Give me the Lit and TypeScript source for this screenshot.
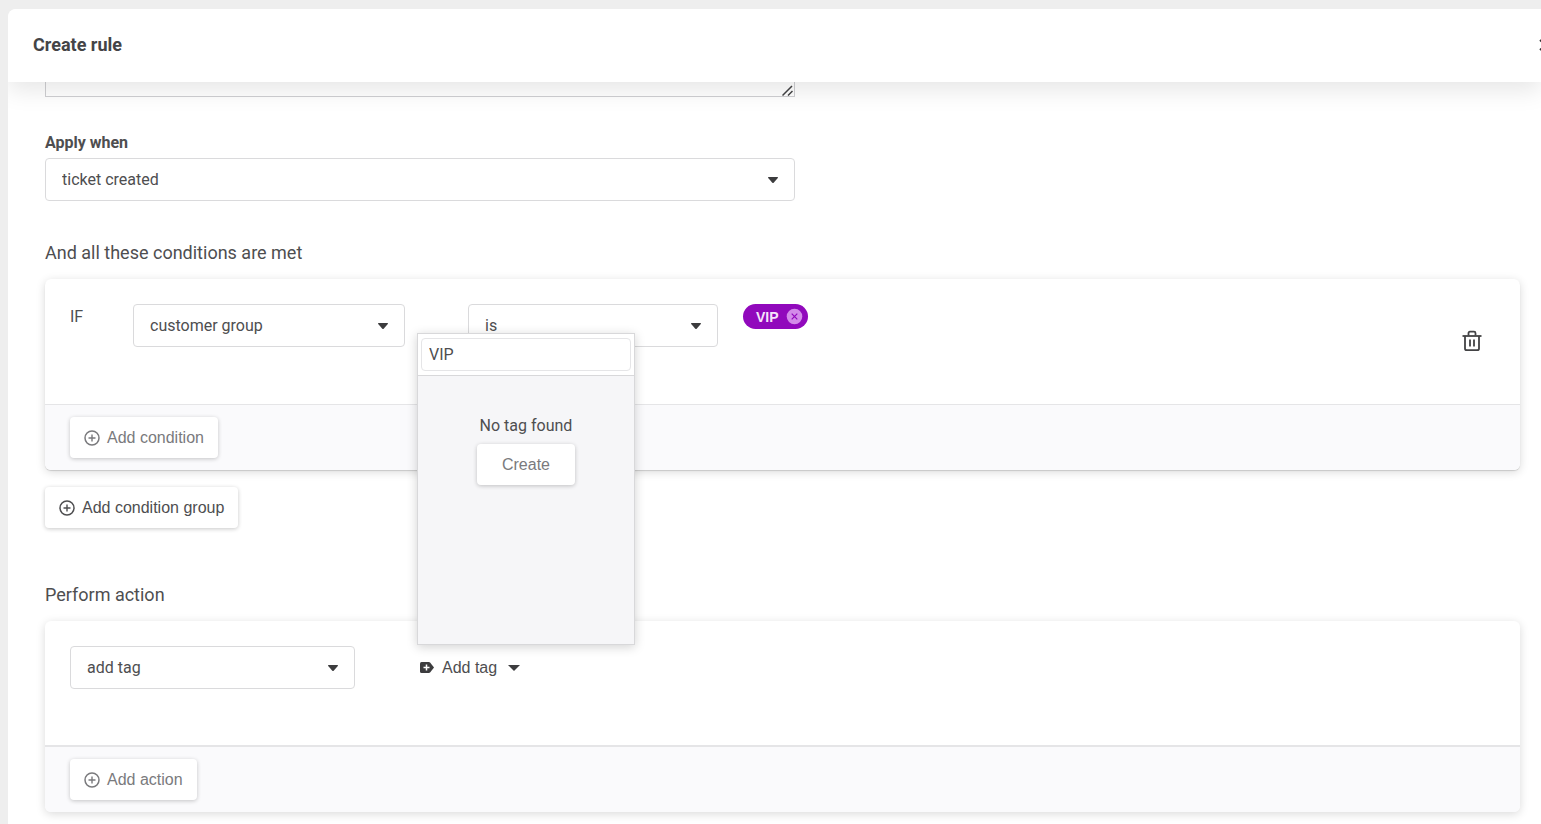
import { LitElement, html, css } from "lit";
import { customElement, property, state } from "lit/decorators.js";

const plusCircle = html`<svg class="icon" viewBox="0 0 16 16" aria-hidden="true">
  <circle cx="8" cy="8" r="7" fill="none" stroke="currentColor" stroke-width="1.5" />
  <path d="M8 4.5v7M4.5 8h7" fill="none" stroke="currentColor" stroke-width="1.4" />
</svg>`;

@customElement("select-box")
class SelectBox extends LitElement {
  @property() label = "";
  @property() name = "";
  @property({ type: Boolean }) showLabel = false;
  @property({ attribute: false }) options: string[] = [];

  static styles = css`
    :host {
      display: block;
    }
    .label {
      display: block;
      font-size: 16px;
      font-weight: 700;
      line-height: 24px;
      margin-bottom: 3px;
    }
    .box {
      display: grid;
      align-items: center;
    }
    .control {
      grid-area: 1 / 1;
      appearance: none;
      box-sizing: border-box;
      width: 100%;
      height: 43px;
      padding: 0 40px 0 16px;
      border: 1px solid #dadadc;
      border-radius: 4px;
      background: #fff;
      color: #4e4e50;
      font-family: inherit;
      font-size: 16px;
    }
    .arrow {
      grid-area: 1 / 1;
      justify-self: end;
      width: 12px;
      height: 8px;
      margin-right: 16px;
      pointer-events: none;
      fill: #3c3c3e;
    }
  `;

  render() {
    return html`
      ${this.showLabel ? html`<label class="label" for="control">${this.label}</label>` : ""}
      <div class="box">
        <select class="control" id="control" name=${this.name} aria-label=${this.label}>
          ${this.options.map((o) => html`<option>${o}</option>`)}
        </select>
        <svg class="arrow" viewBox="0 0 12 8" aria-hidden="true">
          <path d="M1.6 1h8.8q1 .2.4 1L6.7 6.700q-.7.6-1.400 0L1.200 2q-.6-.8.4-1z" />
        </svg>
      </div>
    `;
  }
}

@customElement("tag-picker")
class TagPicker extends LitElement {
  @state() private open = true;

  static styles = css`
    :host {
      display: block;
      position: relative;
      font-family: "Liberation Sans", Arial, sans-serif;
    }
    .trigger {
      display: flex;
      align-items: center;
      gap: 8px;
      height: 43px;
      padding: 0;
      border: 0;
      background: none;
      color: #4e4e50;
      font-family: inherit;
      font-size: 16px;
    }
    .tag {
      width: 14px;
      height: 11px;
    }
    .caret {
      width: 12px;
      height: 6px;
      margin-left: 3px;
      fill: #3c3c3e;
    }
    .popover {
      position: absolute;
      z-index: 2;
      bottom: 44px;
      left: -3px;
      box-sizing: border-box;
      width: 218px;
      height: 312px;
      border: 1px solid #d8d8da;
      background: #f6f6f8;
      box-shadow: 0 2px 10px rgba(0, 0, 0, 0.18);
      font-family: Roboto, sans-serif;
      font-size: 16px;
    }
    .search {
      padding: 4px 3px;
      border-bottom: 1px solid #d8d8da;
      background: #fff;
    }
    .input {
      display: block;
      box-sizing: border-box;
      width: 100%;
      height: 33px;
      padding: 0 7px;
      border: 1px solid #e5e5e7;
      border-radius: 4px;
      background: #fff;
      color: #4e4e50;
      font: inherit;
      outline: none;
    }
    .empty {
      display: flex;
      flex-direction: column;
      align-items: center;
      gap: 6px;
      padding-top: 38px;
      line-height: 24px;
    }
    .message {
      margin: 0;
    }
    .create {
      height: 41px;
      padding: 0 25px;
      border: 0;
      border-radius: 4px;
      background: #fff;
      box-shadow: 0 1px 4px rgba(0, 0, 0, 0.22);
      color: #7a7a7d;
      font-family: "Liberation Sans", Arial, sans-serif;
      font-size: 16px;
    }
  `;

  render() {
    return html`
      <button class="trigger" type="button" aria-expanded=${this.open} @click=${() => (this.open = !this.open)}>
        <svg class="tag" viewBox="0 0 14 11" aria-hidden="true">
          <path d="M1.500 0h7.300q.9 0 1.500.7L14 5.500l-3.700 4.800q-.6.7-1.500.7H1.500Q0 11 0 9.500v-8Q0 0 1.500 0z" fill="#3c3c3e" />
          <path d="M6.500 2.500v6M3.500 5.500h6" stroke="#fff" stroke-width="1.500" />
        </svg>
        <span>Add tag</span>
        <svg class="caret" viewBox="0 0 12 6" aria-hidden="true"><path d="M0 0h12L6 6z" /></svg>
      </button>
      ${this.open
        ? html`<div class="popover">
            <div class="search"><input class="input" type="text" aria-label="Search tags" .value=${"VIP"} /></div>
            <div class="empty">
              <p class="message">No tag found</p>
              <button class="create" type="button">Create</button>
            </div>
          </div>`
        : ""}
    `;
  }
}

@customElement("app-root")
class AppRoot extends LitElement {
  static styles = css`
    :host {
      display: block;
      box-sizing: border-box;
      height: 100vh;
      padding: 9px 0 0 8px;
      overflow: hidden;
      background: #eeeeee;
      color: #4e4e50;
      font-family: Roboto, sans-serif;
      font-size: 16px;
    }
    .panel {
      display: flex;
      flex-direction: column;
      height: 100%;
      overflow: hidden;
      border-radius: 8px 0 0 0;
      background: #fff;
    }
    .header {
      position: relative;
      z-index: 3;
      display: flex;
      align-items: center;
      justify-content: space-between;
      box-sizing: border-box;
      height: 73px;
      flex: none;
      padding: 0 0 2px 25px;
      background: #fff;
      box-shadow: 0 8px 24px rgba(0, 0, 0, 0.1);
    }
    .title {
      margin: 0;
      color: #444446;
      font-size: 18px;
      font-weight: 700;
      line-height: 24px;
    }
    .close {
      width: 12px;
      height: 12px;
      margin-right: -10px;
      padding: 0;
      border: 0;
      background: none;
      color: #333;
    }
    .close svg {
      display: block;
    }
    .body {
      flex: 1;
      min-height: 0;
      padding: 0 21px 0 37px;
      overflow: hidden;
    }
    .field {
      max-width: 750px;
    }
    .scrolled {
      position: relative;
      display: flex;
      align-items: flex-end;
      height: 15px;
      margin-bottom: 34px;
      overflow: hidden;
    }
    .description {
      box-sizing: border-box;
      width: 100%;
      height: 80px;
      flex: none;
      border: 1px solid #cfcfd2;
      background: #fff;
      font: inherit;
      resize: none;
    }
    .grip {
      position: absolute;
      right: 2px;
      bottom: 1px;
      width: 11px;
      height: 11px;
      fill: none;
      stroke: #434345;
      stroke-width: 1.5;
    }
    .heading {
      margin: 40px 0 14px;
      font-size: 18px;
      font-weight: 400;
      line-height: 24px;
    }
    .card {
      border-radius: 6px;
      background: #fff;
      box-shadow: 0 2px 10px rgba(0, 0, 0, 0.15);
    }
    .condition {
      box-shadow: 0 1px 1px rgba(0, 0, 0, 0.14), 0 2px 10px rgba(0, 0, 0, 0.15);
    }
    .row {
      display: grid;
      align-items: start;
      box-sizing: border-box;
      min-height: 125px;
      padding: 25px;
    }
    .if-row {
      grid-template-columns: 63px 272px 250px 1fr auto;
    }
    .if-row .operator {
      margin: 0 -63px 0 63px;
    }
    .if-row .value {
      margin-left: 88px;
    }
    .action-row {
      grid-template-columns: 285px 1fr;
      column-gap: 65px;
      min-height: 124px;
    }
    .word {
      line-height: 26px;
    }
    .footer {
      padding: 12px 25px;
      border-top: 1px solid #e5e5e7;
      border-radius: 0 0 6px 6px;
      background: #fafafc;
    }
    .action-row + .footer {
      border-top-width: 2px;
    }
    .button {
      display: flex;
      align-items: center;
      gap: 7px;
      height: 41px;
      padding: 0 14px;
      border: 0;
      border-radius: 4px;
      background: #fff;
      box-shadow: 0 1px 4px rgba(0, 0, 0, 0.22);
      color: #7a7a7d;
      font-family: "Liberation Sans", Arial, sans-serif;
      font-size: 16px;
    }
    .strong {
      margin-top: 17px;
      color: #4e4e50;
    }
    .icon {
      width: 16px;
      height: 16px;
    }
    .badge {
      display: inline-flex;
      align-items: center;
      gap: 7px;
      height: 25px;
      padding: 0 5px 0 13px;
      border-radius: 13px;
      background: #9109bc;
      color: #f6e3fb;
      font-family: "Liberation Sans", Arial, sans-serif;
      font-size: 14px;
      font-weight: 700;
    }
    .remove,
    .delete {
      display: block;
      padding: 0;
      border: 0;
      background: none;
    }
    .remove svg,
    .delete svg {
      display: block;
    }
    .delete {
      align-self: center;
      margin: 0 13px 2px 0;
    }
    .actions-heading {
      margin-top: 55px;
    }
  `;

  render() {
    return html`
      <section class="panel">
        <header class="header">
          <h1 class="title">Create rule</h1>
          <button class="close" type="button" aria-label="Close">
            <svg width="12" height="12" viewBox="0 0 12 12">
              <path d="M1 1l10 10M11 1L1 11" stroke="currentColor" stroke-width="1.800" />
            </svg>
          </button>
        </header>
        <div class="body">
          <div class="field">
            <div class="scrolled">
              <textarea class="description" aria-label="Description"></textarea>
              <svg class="grip" viewBox="0 0 11 11" aria-hidden="true"><path d="M.5 10.500l9.500-9.500M6 10.500l4.500-4.500" /></svg>
            </div>
            <select-box label="Apply when" name="trigger" showLabel .options=${["ticket created"]}></select-box>
          </div>

          <h2 class="heading">And all these conditions are met</h2>
          <div class="card condition">
            <div class="row if-row">
              <span class="word">IF</span>
              <select-box label="Condition field" name="field" .options=${["customer group"]}></select-box>
              <select-box class="operator" label="Operator" name="operator" .options=${["is"]}></select-box>
              <div class="value">
                <span class="badge">
                  VIP
                  <button class="remove" type="button" aria-label="Remove VIP">
                    <svg width="17" height="17" viewBox="0 0 17 17">
                      <circle cx="8.500" cy="8.500" r="7.800" fill="#d38be9" />
                      <path d="M5.700 5.700l5.600 5.600M11.300 5.700l-5.600 5.600" stroke="#9109bc" stroke-width="1.200" />
                    </svg>
                  </button>
                </span>
              </div>
              <button class="delete" type="button" aria-label="Delete condition">
                <svg width="20" height="22" viewBox="0 0 20 22" fill="none" stroke="#434345" stroke-width="1.800">
                  <path d="M.5 6h19" />
                  <path d="M6.500 5.500V3.200q0-1.500 1.500-1.500h4q1.500 0 1.500 1.500v2.300" />
                  <path d="M3 6v12.500q0 1.700 1.700 1.700h10.600q1.700 0 1.700-1.700V6" />
                  <path d="M8 9.500v7M12 9.500v7" />
                </svg>
              </button>
            </div>
            <div class="footer">
              <button class="button" type="button">${plusCircle}Add condition</button>
            </div>
          </div>
          <button class="button strong" type="button">${plusCircle}Add condition group</button>

          <h2 class="heading actions-heading">Perform action</h2>
          <div class="card">
            <div class="row action-row">
              <select-box label="Action" name="action" .options=${["add tag"]}></select-box>
              <tag-picker></tag-picker>
            </div>
            <div class="footer">
              <button class="button" type="button">${plusCircle}Add action</button>
            </div>
          </div>
        </div>
      </section>
    `;
  }
}
